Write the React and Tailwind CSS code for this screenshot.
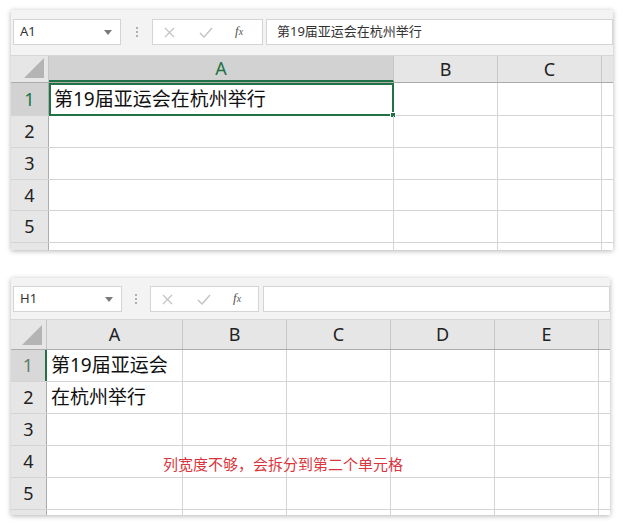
import React from 'react';

const fontCls = "font-['Noto_Sans','Noto_Sans_CJK_SC',sans-serif]";

function Toolbar({ name, formula, heightCls, padCls, nameCls, gapCls, fxCls, inputGapCls }) {
  return (
    <div className={`flex items-start bg-[#f3f3f3] border-b border-[#d6d6d6] pl-[2px] ${heightCls} ${padCls}`}>
      <div className={`relative h-[26px] bg-white border border-[#d4d4d4] flex items-center pl-[6px] text-[13px] text-[#333] ${nameCls}`}>
        {name}
        <svg className="absolute right-[8px] top-[10px]" width="8" height="5" viewBox="0 0 8 5">
          <path d="M0 0 L8 0 L4 5 Z" fill="#7a7a7a" />
        </svg>
      </div>
      <div className={`h-[26px] flex flex-col items-center justify-center gap-[2px] ${gapCls}`}>
        <span className="w-[2px] h-[2px] bg-[#b0b0b0]" />
        <span className="w-[2px] h-[2px] bg-[#b0b0b0]" />
        <span className="w-[2px] h-[2px] bg-[#b0b0b0]" />
      </div>
      <div className={`h-[26px] bg-white border border-[#d4d4d4] flex items-center pl-[11px] ${fxCls}`}>
        <svg width="11" height="11" viewBox="0 0 11 11">
          <path d="M1 1 L10 10 M10 1 L1 10" stroke="#c4c4c4" strokeWidth="1.3" />
        </svg>
        <svg className="ml-[24px]" width="14" height="11" viewBox="0 0 14 11">
          <path d="M1 6 L5 10 L13 1" stroke="#c4c4c4" strokeWidth="1.5" fill="none" />
        </svg>
        <span className="ml-[22px] -mt-[2px] text-[13px] italic text-[#555] font-['Liberation_Serif',serif]">
          f<span className="text-[10px]">x</span>
        </span>
      </div>
      <div className={`flex-1 h-[26px] bg-white border border-[#d4d4d4] flex items-center pl-[10px] text-[13px] text-[#333] ${inputGapCls}`}>
        {formula}
      </div>
    </div>
  );
}

function Sheet({ cols, rowHeaderCls, headerCls, rows, selCol, selRowHeader, cells, selCell }) {
  return (
    <div className="bg-white">
      <div className={`flex bg-[#e6e6e6] border-b border-[#ababab] ${headerCls}`}>
        <div className={`relative border-r border-[#c6c6c6] ${rowHeaderCls}`}>
          <svg className="absolute right-[4px] bottom-[4px]" width="20" height="20" viewBox="0 0 20 20">
            <path d="M20 0 L20 20 L0 20 Z" fill="#b4b4b4" />
          </svg>
        </div>
        {cols.map((c) => (
          <div
            key={c.l}
            className={`flex items-center justify-center text-[18px] border-r border-[#c6c6c6] ${c.w} ${
              c.l === selCol ? 'bg-[#d2d2d2] text-[#217346] border-b-2 border-b-[#217346]' : 'text-[#222]'
            }`}
          >
            {c.l}
          </div>
        ))}
        <div className="flex-1" />
      </div>
      {rows.map((h, i) => (
        <div key={i} className={`flex border-b border-[#d4d4d4] ${h}`}>
          <div
            className={`flex items-center justify-center text-[18px] ${rowHeaderCls} ${
              i === 0
                ? selRowHeader
                : 'bg-[#e6e6e6] text-[#222] border-r border-[#ababab]'
            }`}
          >
            {i + 1}
          </div>
          {cols.map((c, j) => {
            const sel = selCell && selCell[0] === i && selCell[1] === j;
            return (
              <div
                key={c.l}
                className={`relative flex items-center whitespace-nowrap text-[19px] text-[#111] ${c.w} ${
                  sel ? 'border-2 border-[#217346] -mb-px pl-[3px]' : 'border-r border-[#d4d4d4] pl-[4px]'
                }`}
              >
                {cells[`${i}-${j}`] || ''}
                {sel && <span className="absolute -right-[4px] -bottom-[4px] w-[6px] h-[6px] bg-[#217346] border border-white" />}
              </div>
            );
          })}
          <div className="flex-1" />
        </div>
      ))}
      <div className="flex h-[8px]">
        <div className={`bg-[#e6e6e6] border-r border-[#ababab] ${rowHeaderCls}`} />
        {cols.map((c) => (
          <div key={c.l} className={`border-r border-[#d4d4d4] ${c.w}`} />
        ))}
      </div>
    </div>
  );
}

export default function App() {
  return (
    <div className={`w-[623px] h-[523px] bg-white overflow-hidden pt-[10px] pl-[11px] ${fontCls}`}>
      {/* top card */}
      <div className="w-[602px] h-[240px] overflow-hidden bg-white shadow-[0_1px_5px_rgba(0,0,0,0.3)]">
        <Toolbar
          name="A1"
          formula="第19届亚运会在杭州举行"
          heightCls="h-[46px]"
          padCls="pt-[9px]"
          nameCls="w-[108px]"
          gapCls="w-[31px]"
          fxCls="w-[111px]"
          inputGapCls="ml-[3px]"
        />
        <Sheet
          cols={[
            { l: 'A', w: 'w-[345px]' },
            { l: 'B', w: 'w-[104px]' },
            { l: 'C', w: 'w-[104px]' },
          ]}
          rowHeaderCls="w-[38px]"
          headerCls="h-[27px]"
          rows={['h-[33px]', 'h-[32px]', 'h-[32px]', 'h-[31px]', 'h-[32px]']}
          selCol="A"
          selRowHeader="bg-[#d2d2d2] text-[#217346] border-r border-[#ababab]"
          selCell={[0, 0]}
          cells={{ '0-0': '第19届亚运会在杭州举行' }}
        />
      </div>

      {/* bottom card */}
      <div className="relative mt-[28px] w-[599px] h-[237px] overflow-hidden bg-white shadow-[0_1px_5px_rgba(0,0,0,0.3)]">
        <Toolbar
          name="H1"
          formula=""
          heightCls="h-[42px]"
          padCls="pt-[8px]"
          nameCls="w-[109px]"
          gapCls="w-[28px]"
          fxCls="w-[109px]"
          inputGapCls="ml-[4px]"
        />
        <Sheet
          cols={[
            { l: 'A', w: 'w-[136px]' },
            { l: 'B', w: 'w-[104px]' },
            { l: 'C', w: 'w-[104px]' },
            { l: 'D', w: 'w-[104px]' },
            { l: 'E', w: 'w-[104px]' },
          ]}
          rowHeaderCls="w-[36px]"
          headerCls="h-[30px]"
          rows={['h-[32px]', 'h-[32px]', 'h-[32px]', 'h-[32px]', 'h-[32px]']}
          selRowHeader="bg-[#d8d8d8] text-[#5f7f6c] border-r-2 border-r-[#217346]"
          cells={{ '0-0': '第19届亚运会', '1-0': '在杭州举行' }}
        />
        {/* annotation overlay */}
        <span className="absolute left-[152px] top-[175px] text-[15px] text-[#d9363e] whitespace-nowrap">
          列宽度不够，会拆分到第二个单元格
        </span>
      </div>
    </div>
  );
}
